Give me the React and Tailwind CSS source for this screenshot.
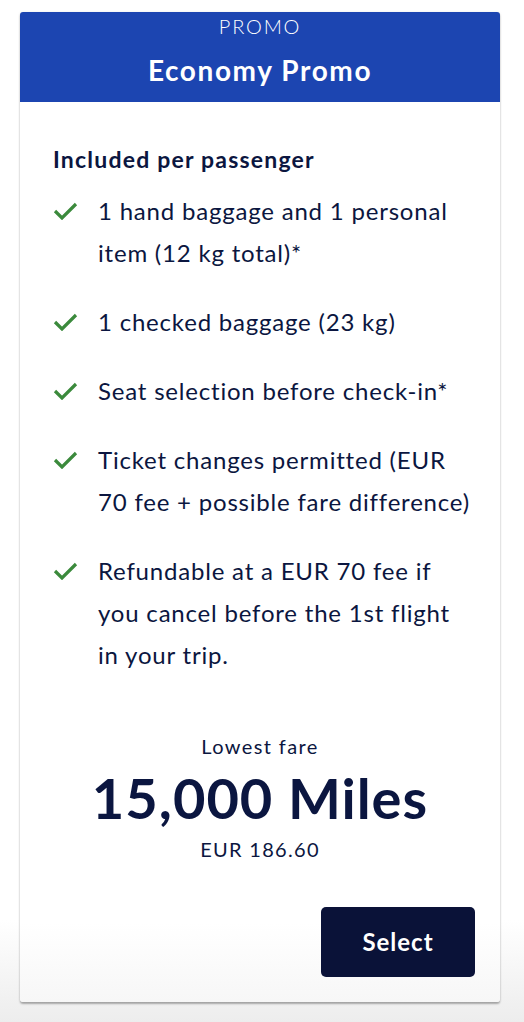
import React from 'react';

const items = [
  '1 hand baggage and 1 personal item (12 kg total)*',
  '1 checked baggage (23 kg)',
  'Seat selection before check-in*',
  'Ticket changes permitted (EUR 70 fee + possible fare difference)',
  'Refundable at a EUR 70 fee if you cancel before the 1st flight in your trip.',
];

const Check = () => (
  <svg width="25" height="18" viewBox="0 0 25 18" className="shrink-0 mt-[12px]">
    <path d="M2 9 L9 16 L23 2" fill="none" stroke="#3b8a3c" strokeWidth="3.2" />
  </svg>
);

export default function App() {
  return (
    <div
      className="min-h-[1022px] pt-[12px] px-[20px] bg-gradient-to-b from-white from-[90%] to-[#ededed] text-[#0b1640]"
      style={{ fontFamily: 'Lato, "Open Sans", sans-serif' }}
    >
      <div className="w-[480px] rounded-[3px] overflow-hidden bg-gradient-to-b from-white from-[92%] to-[#f7f7f7] shadow-[0_2px_2px_rgba(0,0,0,0.3),0_0_3px_rgba(0,0,0,0.08)] pb-[25px]">
        <div className="h-[90px] bg-[#1c45b1] text-white text-center flex flex-col items-center">
          <div className="text-[20px] leading-[26px] pt-[1px] font-light tracking-[1.8px]">PROMO</div>
          <div className="text-[28px] leading-[36px] font-bold mt-[13px] tracking-[1.6px]">Economy Promo</div>
        </div>
        <div className="pl-[33px] pr-[26px] pt-[43px]">
          <div className="text-[23px] leading-[28px] font-bold tracking-[1.2px]">Included per passenger</div>
          <ul className="mt-[17px] flex flex-col gap-[27px]">
            {items.map((t) => (
              <li key={t} className="flex gap-[20px]">
                <Check />
                <span className="text-[24px] leading-[42px] tracking-[0.8px]">{t}</span>
              </li>
            ))}
          </ul>
        </div>
        <div className="text-center mt-[57px]">
          <div className="text-[20px] leading-[26px] tracking-[1.4px]">Lowest fare</div>
          <div className="text-[56px] leading-[64px] font-bold mt-[7px] tracking-[1px]">15,000 Miles</div>
          <div className="text-[20px] leading-[26px] mt-[6px] tracking-[1.3px]">EUR 186.60</div>
        </div>
        <div className="flex justify-end pr-[25px] mt-[45px]">
          <button className="w-[154px] h-[70px] rounded-[5px] bg-[#0a1238] text-white text-[24px] font-bold tracking-[1px]">
            Select
          </button>
        </div>
      </div>
    </div>
  );
}
